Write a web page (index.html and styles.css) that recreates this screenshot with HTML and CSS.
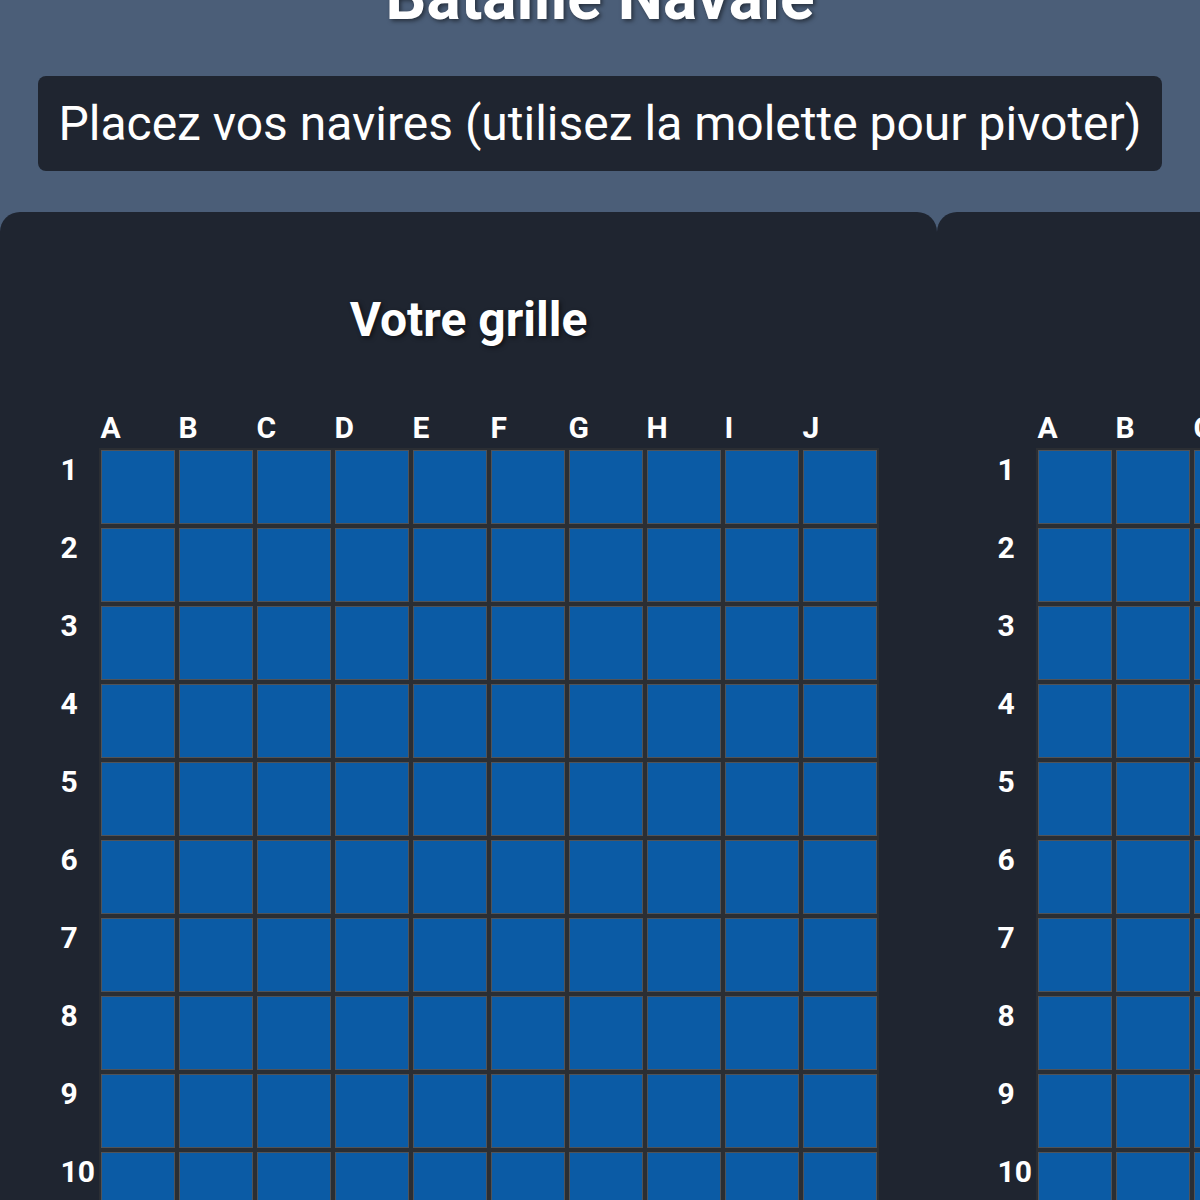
FILE: index.html
```html
<!DOCTYPE html>
<html lang="fr">
<head>
<meta charset="utf-8">
<title>Bataille Navale</title>
<link rel="stylesheet" href="styles.css">
</head>
<body>
<div class="page">
  <h1 class="title">Bataille Navale</h1>
  <div class="status">Placez vos navires (utilisez la molette pour pivoter)</div>
  <div class="boards">
    <section class="panel">
      <h2 class="panel-title">Votre grille</h2>
      <div class="grid">
        <div class="corner"></div>
        <div class="col">A</div><div class="col">B</div><div class="col">C</div><div class="col">D</div><div class="col">E</div><div class="col">F</div><div class="col">G</div><div class="col">H</div><div class="col">I</div><div class="col">J</div>
        <div class="row">1</div><div class="cell"></div><div class="cell"></div><div class="cell"></div><div class="cell"></div><div class="cell"></div><div class="cell"></div><div class="cell"></div><div class="cell"></div><div class="cell"></div><div class="cell"></div>
        <div class="row">2</div><div class="cell"></div><div class="cell"></div><div class="cell"></div><div class="cell"></div><div class="cell"></div><div class="cell"></div><div class="cell"></div><div class="cell"></div><div class="cell"></div><div class="cell"></div>
        <div class="row">3</div><div class="cell"></div><div class="cell"></div><div class="cell"></div><div class="cell"></div><div class="cell"></div><div class="cell"></div><div class="cell"></div><div class="cell"></div><div class="cell"></div><div class="cell"></div>
        <div class="row">4</div><div class="cell"></div><div class="cell"></div><div class="cell"></div><div class="cell"></div><div class="cell"></div><div class="cell"></div><div class="cell"></div><div class="cell"></div><div class="cell"></div><div class="cell"></div>
        <div class="row">5</div><div class="cell"></div><div class="cell"></div><div class="cell"></div><div class="cell"></div><div class="cell"></div><div class="cell"></div><div class="cell"></div><div class="cell"></div><div class="cell"></div><div class="cell"></div>
        <div class="row">6</div><div class="cell"></div><div class="cell"></div><div class="cell"></div><div class="cell"></div><div class="cell"></div><div class="cell"></div><div class="cell"></div><div class="cell"></div><div class="cell"></div><div class="cell"></div>
        <div class="row">7</div><div class="cell"></div><div class="cell"></div><div class="cell"></div><div class="cell"></div><div class="cell"></div><div class="cell"></div><div class="cell"></div><div class="cell"></div><div class="cell"></div><div class="cell"></div>
        <div class="row">8</div><div class="cell"></div><div class="cell"></div><div class="cell"></div><div class="cell"></div><div class="cell"></div><div class="cell"></div><div class="cell"></div><div class="cell"></div><div class="cell"></div><div class="cell"></div>
        <div class="row">9</div><div class="cell"></div><div class="cell"></div><div class="cell"></div><div class="cell"></div><div class="cell"></div><div class="cell"></div><div class="cell"></div><div class="cell"></div><div class="cell"></div><div class="cell"></div>
        <div class="row">10</div><div class="cell"></div><div class="cell"></div><div class="cell"></div><div class="cell"></div><div class="cell"></div><div class="cell"></div><div class="cell"></div><div class="cell"></div><div class="cell"></div><div class="cell"></div>
      </div>
    </section>
    <section class="panel">
      <h2 class="panel-title">Grille adverse</h2>
      <div class="grid">
        <div class="corner"></div>
        <div class="col">A</div><div class="col">B</div><div class="col">C</div><div class="col">D</div><div class="col">E</div><div class="col">F</div><div class="col">G</div><div class="col">H</div><div class="col">I</div><div class="col">J</div>
        <div class="row">1</div><div class="cell"></div><div class="cell"></div><div class="cell"></div><div class="cell"></div><div class="cell"></div><div class="cell"></div><div class="cell"></div><div class="cell"></div><div class="cell"></div><div class="cell"></div>
        <div class="row">2</div><div class="cell"></div><div class="cell"></div><div class="cell"></div><div class="cell"></div><div class="cell"></div><div class="cell"></div><div class="cell"></div><div class="cell"></div><div class="cell"></div><div class="cell"></div>
        <div class="row">3</div><div class="cell"></div><div class="cell"></div><div class="cell"></div><div class="cell"></div><div class="cell"></div><div class="cell"></div><div class="cell"></div><div class="cell"></div><div class="cell"></div><div class="cell"></div>
        <div class="row">4</div><div class="cell"></div><div class="cell"></div><div class="cell"></div><div class="cell"></div><div class="cell"></div><div class="cell"></div><div class="cell"></div><div class="cell"></div><div class="cell"></div><div class="cell"></div>
        <div class="row">5</div><div class="cell"></div><div class="cell"></div><div class="cell"></div><div class="cell"></div><div class="cell"></div><div class="cell"></div><div class="cell"></div><div class="cell"></div><div class="cell"></div><div class="cell"></div>
        <div class="row">6</div><div class="cell"></div><div class="cell"></div><div class="cell"></div><div class="cell"></div><div class="cell"></div><div class="cell"></div><div class="cell"></div><div class="cell"></div><div class="cell"></div><div class="cell"></div>
        <div class="row">7</div><div class="cell"></div><div class="cell"></div><div class="cell"></div><div class="cell"></div><div class="cell"></div><div class="cell"></div><div class="cell"></div><div class="cell"></div><div class="cell"></div><div class="cell"></div>
        <div class="row">8</div><div class="cell"></div><div class="cell"></div><div class="cell"></div><div class="cell"></div><div class="cell"></div><div class="cell"></div><div class="cell"></div><div class="cell"></div><div class="cell"></div><div class="cell"></div>
        <div class="row">9</div><div class="cell"></div><div class="cell"></div><div class="cell"></div><div class="cell"></div><div class="cell"></div><div class="cell"></div><div class="cell"></div><div class="cell"></div><div class="cell"></div><div class="cell"></div>
        <div class="row">10</div><div class="cell"></div><div class="cell"></div><div class="cell"></div><div class="cell"></div><div class="cell"></div><div class="cell"></div><div class="cell"></div><div class="cell"></div><div class="cell"></div><div class="cell"></div>
      </div>
    </section>
  </div>
</div>
</body>
</html>
```

FILE: styles.css
```css
html, body {
  margin: 0;
  padding: 0;
  overflow: hidden;
}
body {
  background: #4b5e78;
  color: #ffffff;
  font-family: Roboto, "Liberation Sans", sans-serif;
}
.page {
  display: flex;
  flex-direction: column;
  align-items: center;
}
.title {
  margin: -40px 0 41px;
  font-size: 64px;
  line-height: 75px;
  font-weight: 700;
  text-shadow: 2px 2px 4px rgba(0, 0, 0, 0.5);
}
.status {
  background: #1f2530;
  border-radius: 8px;
  padding: 19px 20px;
  font-size: 48px;
  line-height: 57px;
  margin-bottom: 41px;
}
.boards {
  align-self: stretch;
  display: flex;
}
.panel {
  flex: 0 0 937px;
  box-sizing: border-box;
  background: #1f2530;
  border-radius: 20px;
  padding: 80px 0 40px;
  display: flex;
  flex-direction: column;
  align-items: center;
}
.panel-title {
  margin: 0 0 62px;
  font-size: 48px;
  line-height: 56px;
  font-weight: 700;
  text-shadow: 2px 2px 4px rgba(0, 0, 0, 0.5);
}
.grid {
  display: grid;
  grid-template-columns: 36px repeat(10, 74px);
  grid-template-rows: 36px repeat(10, 74px);
  gap: 4px;
}
.col, .row {
  font-size: 30px;
  font-weight: 700;
  line-height: 35px;
}
.row {
  padding-top: 2px;
}
.cell {
  box-sizing: border-box;
  background: #0b5ba5;
  border: 1px solid #505358;
  outline: 2px solid #2b2e33;
}
```
